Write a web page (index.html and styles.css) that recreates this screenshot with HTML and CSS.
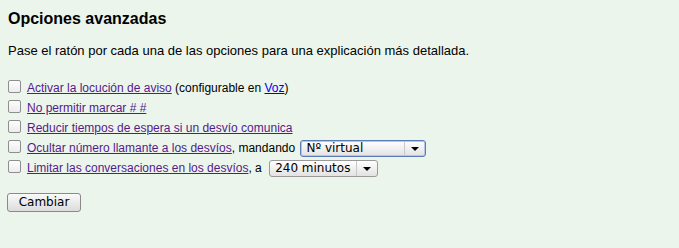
FILE: index.html
```html
<!DOCTYPE html>
<html lang="es">
<head>
<meta charset="utf-8">
<title>Opciones avanzadas</title>
<link rel="stylesheet" href="styles.css">
</head>
<body>
<h1 class="title">Opciones avanzadas</h1>
<p class="intro">Pase el ratón por cada una de las opciones para una explicación más detallada.</p>
<form class="options">
  <div class="row"><span class="cb"></span><a class="lnk" href="#">Activar la locución de aviso</a> (configurable en <a class="lnk new" href="#">Voz</a>)</div>
  <div class="row"><span class="cb"></span><a class="lnk" href="#">No permitir marcar # #</a></div>
  <div class="row"><span class="cb"></span><a class="lnk" href="#">Reducir tiempos de espera si un desvío comunica</a></div>
  <div class="row"><span class="cb"></span><a class="lnk" href="#">Ocultar número llamante a los desvíos</a>, mandando <span class="sel focus sel-wide"><span class="sel-text">Nº virtual</span><span class="sel-arrow"><span class="tri"></span></span></span></div>
  <div class="row"><span class="cb"></span><a class="lnk" href="#">Limitar las conversaciones en los desvíos</a>, a <span class="sel sel-narrow"><span class="sel-text">240 minutos</span><span class="sel-arrow"><span class="tri"></span></span></span></div>
  <div class="actions"><span class="btn">Cambiar</span></div>
</form>
</body>
</html>
```
FILE: styles.css
```css
html, body {
  margin: 0;
  padding: 0;
  background: #ebf5eb;
}
body {
  padding: 0 8px;
  font-family: "Liberation Sans", Arial, sans-serif;
  font-size: 13px;
  color: #000;
}
.title {
  margin: 0;
  padding-top: 9px;
  font-size: 16px;
  font-weight: bold;
  line-height: 20px;
}
.intro {
  margin: 0;
  padding-top: 14px;
  line-height: 16px;
}
.options {
  margin: 0;
  padding-top: 19px;
  font-size: 12px;
}
.row {
  height: 20px;
  line-height: 20px;
  white-space: nowrap;
}
.cb {
  box-sizing: border-box;
  display: inline-block;
  vertical-align: middle;
  position: relative;
  top: -2px;
  width: 13px;
  height: 13px;
  border: 1px solid #8e8e8e;
  border-radius: 2px;
  background: linear-gradient(#fdfdfd, #ececec);
  margin-right: 6px;
}
.lnk {
  color: #551a8b;
  text-decoration: underline;
}
.lnk.new {
  color: #0000ee;
}
.sel {
  box-sizing: border-box;
  display: inline-flex;
  vertical-align: middle;
  align-items: stretch;
  height: 17px;
  margin-left: 2px;
  border: 1px solid #9a9a9a;
  border-radius: 3px;
  background: linear-gradient(#ffffff, #e2e2e2);
  font-family: "DejaVu Sans", sans-serif;
  font-size: 12px;
  line-height: 15px;
}
.sel.focus {
  border-color: #5b7cb8;
  box-shadow: inset 0 0 0 1px #b4c6e6;
}
.sel-wide { width: 126px; }
.sel-narrow { width: 109px; margin-left: 4px; }
.sel-text {
  flex: 1;
  padding-left: 5px;
  overflow: hidden;
}
.sel-arrow {
  width: 20px;
  border-left: 1px solid #c8c8c8;
  display: flex;
  align-items: center;
  justify-content: center;
}
.tri {
  width: 0;
  height: 0;
  border-left: 4px solid transparent;
  border-right: 4px solid transparent;
  border-top: 4px solid #000;
}
.actions {
  padding-top: 15px;
  line-height: 16px;
}
.btn {
  box-sizing: border-box;
  display: inline-block;
  width: 74px;
  height: 19px;
  margin-left: -1px;
  border: 1px solid #8a8a8a;
  border-radius: 3px;
  background: linear-gradient(#fafafa, #dcdcdc);
  font-family: "DejaVu Sans", sans-serif;
  font-size: 12px;
  line-height: 17px;
  text-align: center;
}
```
